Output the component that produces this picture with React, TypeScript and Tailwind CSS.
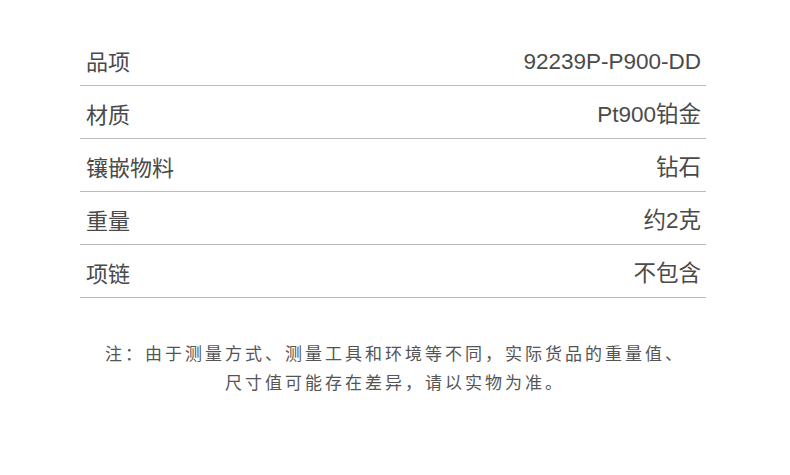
const rows = [
  { label: "品项", value: "92239P-P900-DD" },
  { label: "材质", value: "Pt900铂金" },
  { label: "镶嵌物料", value: "钻石" },
  { label: "重量", value: "约2克" },
  { label: "项链", value: "不包含" },
];

export default function App() {
  return (
    <div
      className="w-[790px] h-[475px] bg-white pt-[33px]"
      style={{ fontFamily: '"Liberation Sans", "Noto Sans CJK SC", sans-serif' }}
    >
      <div className="ml-[80px] w-[626px]">
        {rows.map((r) => (
          <div
            key={r.label}
            className="h-[53px] flex items-center justify-between border-b border-[#bbbbbb] pl-[6px] pr-[5px] pt-[6px] text-[22px] text-[#4a4a4a]"
          >
            <span>{r.label}</span>
            <span className="text-[22.5px]">{r.value}</span>
          </div>
        ))}
      </div>
      <div className="mt-[42px] text-center text-[17px] leading-[29px] tracking-[3px] text-[#555555]">
        <p>注：由于测量方式、测量工具和环境等不同，实际货品的重量值、</p>
        <p>尺寸值可能存在差异，请以实物为准。</p>
      </div>
    </div>
  );
}
